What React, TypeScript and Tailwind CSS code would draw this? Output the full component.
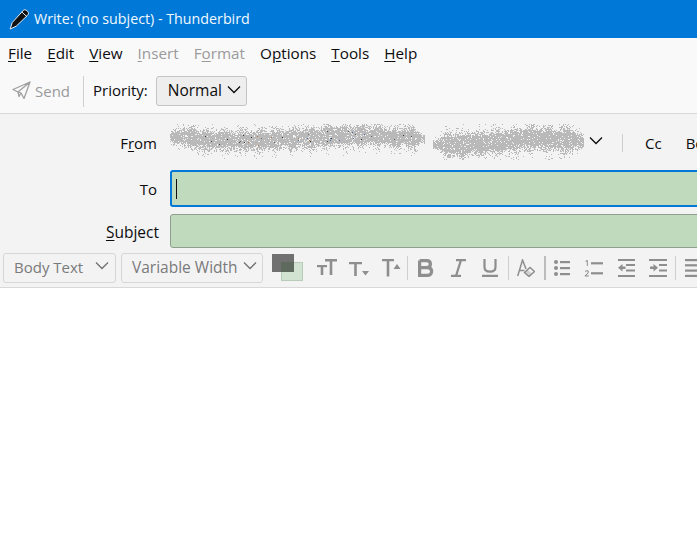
import React from "react";

const font = { fontFamily: '"Open Sans","Noto Sans",sans-serif' };

function Chevron({ className = "" }: { className?: string }) {
  return (
    <svg width="14" height="9" viewBox="0 0 14 9" className={className} fill="none" stroke="currentColor" strokeWidth="1.3">
      <path d="M1 1.5 7 7.5 13 1.5" />
    </svg>
  );
}

function Noise() {
  let seed = 12345;
  const rnd = () => {
    seed = (seed * 16807) % 2147483647;
    return seed / 2147483647;
  };
  const pts: React.ReactNode[] = [];
  const colors = ["#444", "#666", "#b5763a", "#4a6fa5", "#333"];
  for (let x = 170; x < 584; x++) {
    if (x > 424 && x < 433) continue;
    const left = x < 428;
    const t = left ? (x - 170) / 255 : (x - 433) / 151;
    const c = left ? 14 + 2.5 * Math.sin(t * 6.5) + (t < 0.1 ? -2 : 0) : 17 + 3.5 * Math.sin(t * 5 + 1) + t;
    const env = Math.min(1, Math.min(t, 1 - t) * (left ? 14 : 8) + 0.35);
    const amp = (left ? 9.5 : 11) * env + 1.5 * Math.sin(x * 0.37);
    for (let y = 0; y < 36; y++) {
      const d = Math.abs(y - c) / Math.max(amp, 3);
      const p = d < 0.6 ? 0.9 : d < 1.3 ? 0.85 - (d - 0.6) * 1.05 : d < 1.8 ? 0.07 : 0;
      if (rnd() < p) {
        const dark = left && t > 0.1 && d < 0.5 && rnd() < 0.025;
        pts.push(
          <rect key={`${x}-${y}`} x={x - 170} y={y} width="1" height="1" fill={dark ? colors[Math.floor(rnd() * 5)] : "#b9b9b9"} />
        );
      }
    }
  }
  return (
    <svg width="416" height="36" className="shrink-0" shapeRendering="crispEdges">
      {pts}
    </svg>
  );
}

function Menu({ children, disabled }: { children: React.ReactNode; disabled?: boolean }) {
  return <span className={disabled ? "text-[#9a9a9a]" : "text-[#0c0c0d]"}>{children}</span>;
}

const g = "#8e8e8e";

function Sep({ h = "h-[24px]", c = "bg-[#cfcfcf]" }: { h?: string; c?: string }) {
  return <div className={`w-px ${h} ${c} shrink-0`} />;
}

function Select({ label, w, gap, size }: { label: string; w: string; gap: string; size: string }) {
  return (
    <div className={`${w} ${size} h-[30px] border border-[#d6d6d6] rounded-[3px] bg-[#f3f3f4] flex items-center pl-[10px] text-[#7a7a7a] shrink-0`}>
      <span>{label}</span>
      <Chevron className={`${gap} text-[#707070] -mt-1`} />
    </div>
  );
}

export default function App() {
  return (
    <div className="w-[697px] h-[546px] overflow-hidden bg-white flex flex-col" style={font}>
      <div className="h-[38px] bg-[#0078d7] flex items-center pl-[9px] text-white text-[14.25px] shrink-0">
        <svg width="21" height="21" viewBox="0 0 21 21" className="shrink-0">
          <path d="M14.5 1.2c1-.7 2.2-.5 3.4.5 1.3 1 1.900 2.300 1.400 3.400-.2.500-.6 1-1 1.400L7.200 17.200 1.200 20l2-6.400z" fill="#111" stroke="#e8eef5" strokeWidth="1" />
          <path d="M13 3.200 18 7.800" stroke="#e8eef5" strokeWidth="1" />
        </svg>
        <span className="ml-[4px] whitespace-nowrap text-[#f2f8fd]">Write: (no subject) - Thunderbird</span>
      </div>

      <div className="bg-[#f9f9fa] border-b border-[#d8d8d8] shrink-0 h-[76px] flex flex-col">
        <div className="h-[33px] flex items-center pl-[8px] pb-[2px] gap-[15px] text-[15.25px] leading-none">
          <Menu><u className="underline-offset-2">F</u>ile</Menu>
          <Menu><u className="underline-offset-2">E</u>dit</Menu>
          <Menu><u className="underline-offset-2">V</u>iew</Menu>
          <Menu disabled><u className="underline-offset-2">I</u>nsert</Menu>
          <Menu disabled>F<u className="underline-offset-2">o</u>rmat</Menu>
          <Menu>O<u className="underline-offset-2">p</u>tions</Menu>
          <Menu><u className="underline-offset-2">T</u>ools</Menu>
          <Menu><u className="underline-offset-2">H</u>elp</Menu>
        </div>
        <div className="flex items-center h-[36px] mt-[2px] pl-[12px] text-[15px]">
          <svg width="19" height="19" viewBox="0 0 19 19" fill="none" stroke="#a0a0a0" strokeWidth="1.3" strokeLinejoin="round" className="shrink-0 -mt-[1px]">
            <path d="M18 1 1 8.500l5 2.500L18 1l-6 16.500-3-5.500-3-1z" />
            <path d="M9 12 7 15.500 6 11" />
          </svg>
          <span className="ml-[4px] text-[#9a9a9a] mt-[1px]">Send</span>
          <div className="ml-[13px]"><Sep h="h-[31px]" /></div>
          <span className="ml-[9px] text-[#0c0c0d] -mt-[1px]">Priority:</span>
          <div className="ml-[8px] w-[91px] h-[30px] border border-[#c4c4c4] rounded-[3px] bg-[#eeeeef] flex items-center pl-[11px] text-[15.5px] text-[#0c0c0d]">
            <span>Normal</span>
            <Chevron className="ml-[5px] -mt-1" />
          </div>
        </div>
      </div>

      <div className="bg-[#f3f3f4] border-b border-[#d8d8d8] h-[174px] shrink-0 flex flex-col text-[15px] text-[#0c0c0d]">
        <div className="h-[56px] flex items-center">
          <span className="w-[157px] text-right shrink-0 mt-[3px]">F<u className="underline-offset-2">r</u>om</span>
          <div className="ml-[13px]"><Noise /></div>
          <Chevron className="ml-[3px] -mt-[3px] shrink-0" />
          <div className="ml-[19px] mt-[2px]"><Sep h="h-[18px]" /></div>
          <span className="ml-[22px] mt-[3px] shrink-0">Cc</span>
          <span className="ml-[24px] mt-[3px] shrink-0">Bcc</span>
        </div>
        <div className="flex items-center h-[37px]">
          <span className="w-[157px] text-right shrink-0 mt-[1px]">To</span>
          <div className="ml-[13px] w-[560px] h-[37px] rounded-[3px] border-2 border-[#0078d7] bg-[#bfdabd] flex items-center pl-[4px] shrink-0">
            <div className="w-px h-[20px] bg-[#111]" />
          </div>
        </div>
        <div className="flex items-center h-[34px] mt-[7px]">
          <span className="w-[159px] text-right shrink-0 text-[15.5px] mt-[4px]"><u className="underline-offset-2">S</u>ubject</span>
          <div className="ml-[11px] w-[560px] h-[34px] rounded-[3px] border border-[#8f9f8e] bg-[#bfdabd] shrink-0" />
        </div>
        <div className="flex items-center h-[32px] mt-[3px] pl-[3px] pt-[1px]">
          <Select label="Body Text" w="w-[113px]" gap="ml-[12px]" size="text-[15px]" />
          <div className="w-[5px] shrink-0" />
          <Select label="Variable Width" w="w-[142px]" gap="ml-[5px]" size="text-[15.5px]" />
          <div className="relative w-[22px] h-[28px] ml-[9px] shrink-0">
            <div className="absolute left-[9px] top-[8px] w-[22px] h-[19px] bg-[#d3e3d1] border border-[#b8cdb7]" />
            <div className="absolute left-0 top-0 w-[22px] h-[18px] bg-[#707070]" />
            <div className="absolute left-[9px] top-[8px] w-[13px] h-[10px] bg-[#5f6a5f]" />
          </div>
          {/* small + big T */}
          <svg width="20" height="17" viewBox="0 0 20 17" fill={g} className="ml-[23px] shrink-0">
            <path d="M0 6h10v2.300H6.300V16H3.700V8.300H0zM8 0h12v2.400h-4.700V16h-2.600V2.400H8z" />
          </svg>
          {/* T down */}
          <svg width="22" height="14" viewBox="0 0 22 14" fill={g} className="ml-[11px] mt-[2px] shrink-0">
            <path d="M1 0h13v2.300H8.800V14H6.200V2.300H1zM14 9h7l-3.500 4.500z" />
          </svg>
          {/* T up */}
          <svg width="21" height="18" viewBox="0 0 21 18" fill={g} className="ml-[11px] shrink-0">
            <path d="M1 0h12v2.300H8.300V17.500H5.700V2.300H1zM12.500 10h7L16 5z" />
          </svg>
          <div className="ml-[5px]"><Sep h="h-[24px]" /></div>
          <svg width="16" height="18" viewBox="0 0 16 18" className="ml-[10px] shrink-0" fill="none" stroke={g} strokeWidth="3.2">
            <path d="M1.600 1.600h7c2.500 0 3.800 1.200 3.800 3.300S11 8.600 8.600 8.600H1.600M1.600 8.600h7.800c2.500 0 4.200 1.300 4.200 3.700s-1.700 4.100-4.200 4.100H1.600V1.600" />
          </svg>
          <svg width="15" height="18" viewBox="0 0 15 18" className="ml-[17px] shrink-0" fill="none" stroke={g} strokeWidth="2.200">
            <path d="M5 1.100h10M0 16.900h10M10 1.100 5 16.900" />
          </svg>
          <svg width="16" height="18" viewBox="0 0 16 18" className="ml-[16px] shrink-0" fill="none" stroke={g} strokeWidth="2.200">
            <path d="M2.500 0v8c0 3.200 2 4.700 5.500 4.700S13.500 11.200 13.500 8V0M0 16.900h16" />
          </svg>
          <div className="ml-[10px]"><Sep h="h-[24px]" /></div>
          <svg width="18" height="18" viewBox="0 0 18 18" className="ml-[8px] shrink-0" fill="none" stroke={g} strokeWidth="1.500">
            <path d="M.7 17 5.500 1 9 10M2.500 11.500h5" />
            <path d="m7.500 13.500 5.500-5 4.500 4-5.500 5z" fill="#f3f3f4" />
            <path d="m7.500 13.500 3-2.800 4.500 4-3 2.800z" fill={g} stroke="none" opacity=".35" />
          </svg>
          <div className="ml-[9px]"><div className="w-[2px] h-[24px] bg-[#bdbdbd]" /></div>
          <svg width="16" height="16" viewBox="0 0 16 16" fill={g} className="ml-[8px] shrink-0">
            <circle cx="2" cy="2" r="2" /><circle cx="2" cy="8" r="2" /><circle cx="2" cy="14" r="2" />
            <rect x="6" y="1" width="10" height="2.200" /><rect x="6" y="7" width="10" height="2.200" /><rect x="6" y="13" width="10" height="2.200" />
          </svg>
          <svg width="19" height="18" viewBox="0 0 19 18" className="ml-[14px] shrink-0" fill={g}>
            <rect x="7" y="3.200" width="12" height="2.200" /><rect x="7" y="13.200" width="12" height="2.200" />
            <path d="M1.500 2 3 1h.8v6H2.800V2.300l-1.300.8zM.8 17.500v-.9l2.200-2.200c.6-.6.8-1 .8-1.400 0-.5-.4-.8-1-.8-.5 0-1 .2-1.500.6l-.4-.7c.6-.5 1.200-.8 2-.8 1.200 0 1.900.6 1.900 1.600 0 .7-.4 1.300-1.100 2L2.200 16.600h2.700v.9z" />
          </svg>
          <svg width="17" height="18" viewBox="0 0 17 18" fill={g} className="ml-[15px] shrink-0">
            <rect x="0" y="0" width="17" height="2" /><rect x="8" y="5" width="9" height="2" /><rect x="8" y="10.500" width="9" height="2" /><rect x="0" y="16" width="17" height="2" />
            <path d="M0 8.800 4.500 5v2.600h3v2.400h-3v2.600z" />
          </svg>
          <svg width="18" height="18" viewBox="0 0 18 18" fill={g} className="ml-[14px] shrink-0">
            <rect x="0" y="0" width="18" height="2" /><rect x="10" y="5" width="8" height="2" /><rect x="10" y="10.500" width="8" height="2" /><rect x="0" y="16" width="18" height="2" />
            <path d="M9 8.800 4.500 5v2.600h-3.500v2.400h3.500v2.600z" />
          </svg>
          <div className="ml-[8px]"><Sep h="h-[24px]" /></div>
          <svg width="18" height="18" viewBox="0 0 18 18" fill={g} className="ml-[9px] shrink-0">
            <rect x="0" y="0" width="18" height="2.200" /><rect x="0" y="5.200" width="18" height="2.200" /><rect x="0" y="10.500" width="18" height="2.200" /><rect x="0" y="15.800" width="18" height="2.200" />
          </svg>
        </div>
      </div>
      <div className="flex-1 bg-white" />
    </div>
  );
}
